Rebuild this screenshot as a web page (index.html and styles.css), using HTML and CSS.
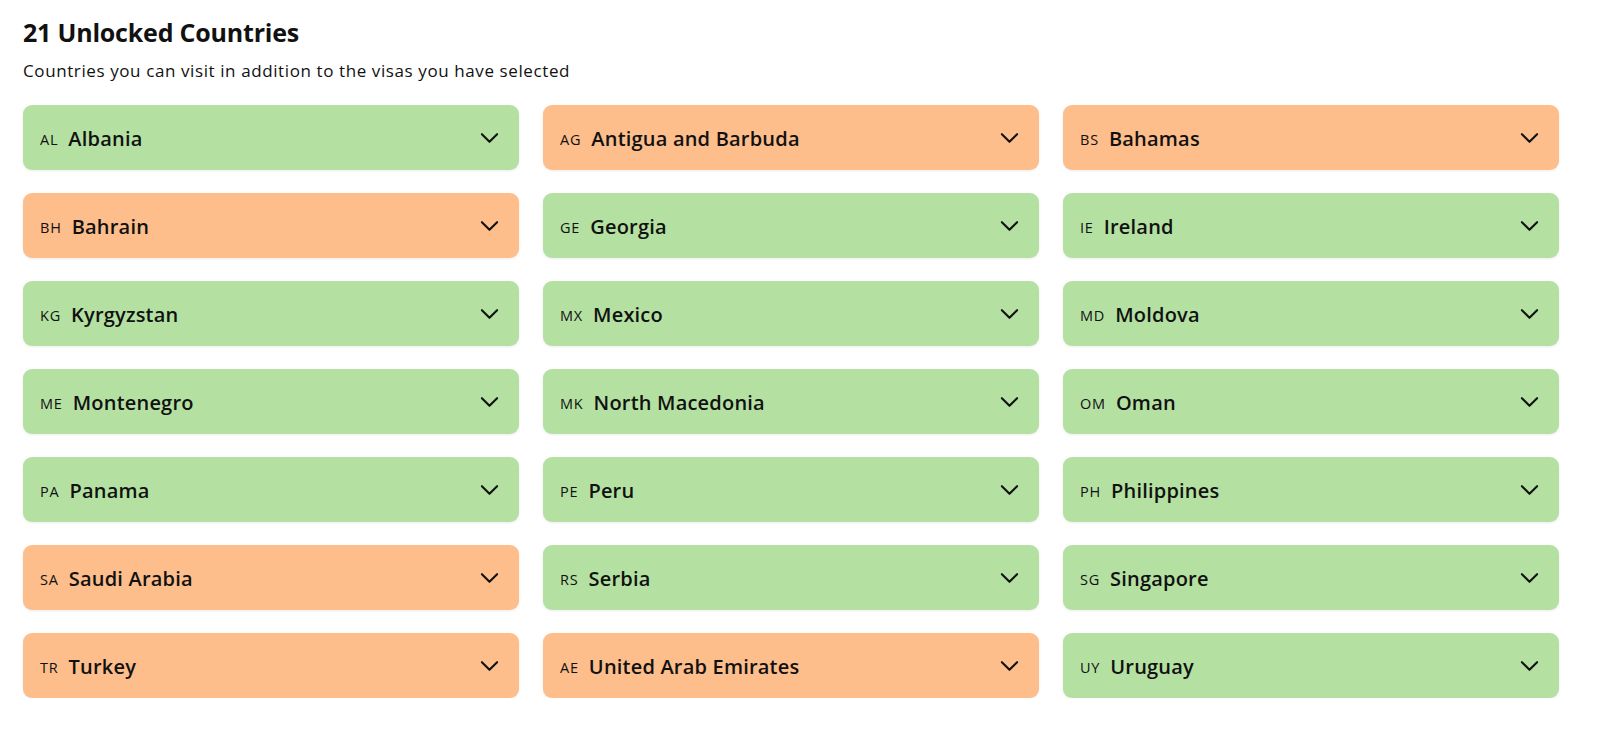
FILE: index.html
```html
<!DOCTYPE html>
<html lang="en">
<head>
<meta charset="utf-8">
<title>Unlocked Countries</title>
<link rel="stylesheet" href="styles.css">
</head>
<body>
<main class="page">
  <h1 class="title">21 Unlocked Countries</h1>
  <p class="subtitle">Countries you can visit in addition to the visas you have selected</p>
  <div class="grid">
    <div class="card green"><span class="code">AL</span><span class="name">Albania</span><svg class="chev" viewBox="0 0 20 12"><path d="M2 2l8 8 8-8"/></svg></div>
    <div class="card orange"><span class="code">AG</span><span class="name">Antigua and Barbuda</span><svg class="chev" viewBox="0 0 20 12"><path d="M2 2l8 8 8-8"/></svg></div>
    <div class="card orange"><span class="code">BS</span><span class="name">Bahamas</span><svg class="chev" viewBox="0 0 20 12"><path d="M2 2l8 8 8-8"/></svg></div>
    <div class="card orange"><span class="code">BH</span><span class="name">Bahrain</span><svg class="chev" viewBox="0 0 20 12"><path d="M2 2l8 8 8-8"/></svg></div>
    <div class="card green"><span class="code">GE</span><span class="name">Georgia</span><svg class="chev" viewBox="0 0 20 12"><path d="M2 2l8 8 8-8"/></svg></div>
    <div class="card green"><span class="code">IE</span><span class="name">Ireland</span><svg class="chev" viewBox="0 0 20 12"><path d="M2 2l8 8 8-8"/></svg></div>
    <div class="card green"><span class="code">KG</span><span class="name">Kyrgyzstan</span><svg class="chev" viewBox="0 0 20 12"><path d="M2 2l8 8 8-8"/></svg></div>
    <div class="card green"><span class="code">MX</span><span class="name">Mexico</span><svg class="chev" viewBox="0 0 20 12"><path d="M2 2l8 8 8-8"/></svg></div>
    <div class="card green"><span class="code">MD</span><span class="name">Moldova</span><svg class="chev" viewBox="0 0 20 12"><path d="M2 2l8 8 8-8"/></svg></div>
    <div class="card green"><span class="code">ME</span><span class="name">Montenegro</span><svg class="chev" viewBox="0 0 20 12"><path d="M2 2l8 8 8-8"/></svg></div>
    <div class="card green"><span class="code">MK</span><span class="name">North Macedonia</span><svg class="chev" viewBox="0 0 20 12"><path d="M2 2l8 8 8-8"/></svg></div>
    <div class="card green"><span class="code">OM</span><span class="name">Oman</span><svg class="chev" viewBox="0 0 20 12"><path d="M2 2l8 8 8-8"/></svg></div>
    <div class="card green"><span class="code">PA</span><span class="name">Panama</span><svg class="chev" viewBox="0 0 20 12"><path d="M2 2l8 8 8-8"/></svg></div>
    <div class="card green"><span class="code">PE</span><span class="name">Peru</span><svg class="chev" viewBox="0 0 20 12"><path d="M2 2l8 8 8-8"/></svg></div>
    <div class="card green"><span class="code">PH</span><span class="name">Philippines</span><svg class="chev" viewBox="0 0 20 12"><path d="M2 2l8 8 8-8"/></svg></div>
    <div class="card orange"><span class="code">SA</span><span class="name">Saudi Arabia</span><svg class="chev" viewBox="0 0 20 12"><path d="M2 2l8 8 8-8"/></svg></div>
    <div class="card green"><span class="code">RS</span><span class="name">Serbia</span><svg class="chev" viewBox="0 0 20 12"><path d="M2 2l8 8 8-8"/></svg></div>
    <div class="card green"><span class="code">SG</span><span class="name">Singapore</span><svg class="chev" viewBox="0 0 20 12"><path d="M2 2l8 8 8-8"/></svg></div>
    <div class="card orange"><span class="code">TR</span><span class="name">Turkey</span><svg class="chev" viewBox="0 0 20 12"><path d="M2 2l8 8 8-8"/></svg></div>
    <div class="card orange"><span class="code">AE</span><span class="name">United Arab Emirates</span><svg class="chev" viewBox="0 0 20 12"><path d="M2 2l8 8 8-8"/></svg></div>
    <div class="card green"><span class="code">UY</span><span class="name">Uruguay</span><svg class="chev" viewBox="0 0 20 12"><path d="M2 2l8 8 8-8"/></svg></div>
  </div>
</main>
</body>
</html>
```
FILE: styles.css
```css
html, body {
  margin: 0;
  padding: 0;
  background: #ffffff;
}
body {
  font-family: "Open Sans", "Noto Sans", "Liberation Sans", sans-serif;
  color: #111111;
}
.page {
  padding: 16px 41px 0 23px;
}
.title {
  margin: 0;
  font-size: 25px;
  line-height: 32px;
  font-weight: 700;
  letter-spacing: -0.2px;
}
.subtitle {
  margin: 11px 0 0 0;
  font-size: 17px;
  line-height: 24px;
  letter-spacing: 0.6px;
}
.grid {
  margin-top: 22px;
  display: grid;
  grid-template-columns: repeat(3, 1fr);
  column-gap: 24px;
  row-gap: 23px;
}
.card {
  height: 65px;
  border-radius: 9px;
  display: flex;
  align-items: center;
  padding: 0 20px 0 17px;
  box-shadow: 0 1px 3px rgba(0, 0, 0, 0.08);
}
.green { background: #b4e1a2; }
.orange { background: #fdbe8c; }
.code {
  font-size: 14.5px;
  margin-right: 10px;
  padding-top: 3px;
  letter-spacing: 0.8px;
}
.name {
  font-size: 20px;
  font-weight: 600;
  flex: 1;
  letter-spacing: 0.2px;
  padding-top: 1px;
}
.chev {
  width: 19px;
  height: 12px;
  fill: none;
  stroke: #111111;
  stroke-width: 2.2;
  stroke-linecap: round;
  stroke-linejoin: round;
}
```
